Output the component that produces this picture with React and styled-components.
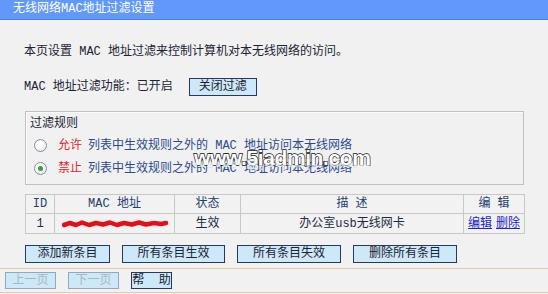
import React from 'react'
import styled, { createGlobalStyle } from 'styled-components'

const font = `"Liberation Mono", "Noto Sans CJK SC", monospace`

const GlobalStyle = createGlobalStyle`
  html, body {
    margin: 0;
    padding: 0;
    background: #f1f1f1;
  }
  body {
    font-family: ${font};
    font-size: 12px;
    line-height: 14px;
    color: #1b2436;
  }
`

const Frame = styled.div`
  width: 548px;
  height: 294px;
  display: flex;
  flex-direction: column;
  overflow: hidden;
  background: #f1f1f1;
`

const Header = styled.div`
  height: 19px;
  line-height: 19px;
  padding-left: 13px;
  background: #6298f9;
  border-bottom: 1px solid #4a7ddb;
  color: #fff;
`

const Main = styled.div`
  padding: 0 24px 0 25px;
  display: flex;
  flex-direction: column;
`

const Intro = styled.div`
  margin-top: 25px;
  line-height: 14px;
  margin-left: -1px;
`

const StatusRow = styled.div`
  margin-top: 19px;
  margin-left: -1px;
  display: flex;
  align-items: center;
  gap: 16px;
  height: 18px;
`

const Button = styled.button`
  box-sizing: border-box;
  width: ${p => p.$w}px;
  height: ${p => p.$h || 18}px;
  padding: 0;
  border: 1px solid ${p => (p.disabled ? '#8ea8c6' : '#26395a')};
  background: #cde8f8;
  font-family: ${font};
  font-size: 12px;
  line-height: 14px;
  color: ${p => (p.disabled ? '#a8b6c4' : '#1b2230')};
  white-space: pre;
  flex-shrink: 0;
`

const RuleBox = styled.div`
  position: relative;
  margin-top: 15px;
  width: 499px;
  height: 74px;
  box-sizing: border-box;
  border: 1px solid #c2c2bc;
  box-shadow: inset 1px 1px 0 #fbfbfb;
  padding: 5px 0 0 4px;
`

const Legend = styled.div`
  line-height: 14px;
  margin-bottom: 3px;
`

const RadioRow = styled.div`
  display: flex;
  align-items: center;
  height: 23px;
  padding-left: 4px;
`

const Radio = styled.span`
  width: 11px;
  height: 11px;
  border-radius: 50%;
  border: 1px solid #7f8e9c;
  background: radial-gradient(circle at 40% 35%, #ffffff 30%, #dfe3e8 100%);
  margin-right: 11px;
  display: flex;
  align-items: center;
  justify-content: center;
  &::after {
    content: '';
    width: 5px;
    height: 5px;
    border-radius: 50%;
    background: ${p => (p.$on ? '#3d9a3d' : 'transparent')};
  }
`

const Action = styled.span`
  color: #e2262a;
  margin-right: 6px;
`

const RuleText = styled.span`
  color: #2c4a8e;
`

const Watermark = styled.div`
  position: absolute;
  left: 168px;
  top: ${p => (p.$mirror ? 60 : 35)}px;
  font-family: "Liberation Sans", sans-serif;
  font-weight: bold;
  font-size: 21px;
  line-height: 22px;
  letter-spacing: -0.4px;
  color: ${p => (p.$mirror ? 'rgba(255,255,255,0.7)' : '#ffffff')};
  -webkit-text-stroke: ${p => (p.$mirror ? '0.5px rgba(150,150,150,0.45)' : '1.4px #111')};
  paint-order: stroke fill;
  transform: ${p => (p.$mirror ? 'scaleY(-0.7)' : 'none')};
  transform-origin: top;
  pointer-events: none;
  white-space: nowrap;
`

const Table = styled.table`
  margin-top: 9px;
  width: 499px;
  border-collapse: collapse;
  table-layout: fixed;
  line-height: 14px;
`

const Th = styled.th`
  height: 18px;
  padding: 0;
  border: 1px solid #c8c8c4;
  font-weight: normal;
  color: #23406e;
  background: #f2f2f2;
  text-align: center;
`

const Td = styled.td`
  height: 19px;
  padding: 0;
  border: 1px solid #c8c8c4;
  background: #f2f2f2;
  text-align: center;
  color: #1f2b44;
  white-space: nowrap;
`

const Link = styled.a`
  color: #2424c8;
  text-decoration: underline;
  margin: 0 2px;
`

const ButtonRow = styled.div`
  margin-top: 11px;
  display: flex;
  gap: 12px;
`

const Footer = styled.div`
  margin-top: 5px;
  border-top: 1px solid #e4cba6;
  border-bottom: 1px solid #e4cba6;
  height: 25px;
  padding: 3px 0 0 5px;
  display: flex;
  align-items: flex-start;
  gap: 12px;
  box-sizing: border-box;
  flex-shrink: 0;
`

const Scribble = () => (
  <svg width="106" height="8" viewBox="0 0 106 8" style={{ display: 'block', margin: '0 auto' }}>
    <path
      d="M2 5 L8 3 L14 5 L20 2.5 L27 5 L34 3 L41 4.5 L48 2.5 L55 5 L62 3 L70 4.5 L77 2.5 L84 4.5 L92 3 L99 4 L104 3"
      stroke="#e3101a"
      strokeWidth="4.5"
      fill="none"
      strokeLinecap="round"
      strokeLinejoin="round"
    />
  </svg>
)

const rules = [
  { label: '允许', on: false },
  { label: '禁止', on: true },
]

export default function App() {
  return (
    <Frame>
      <GlobalStyle />
      <Header>无线网络MAC地址过滤设置</Header>
      <Main>
        <Intro>本页设置 MAC 地址过滤来控制计算机对本无线网络的访问。</Intro>
        <StatusRow>
          <span>MAC 地址过滤功能：已开启</span>
          <Button $w={68}>关闭过滤</Button>
        </StatusRow>
        <RuleBox>
          <Legend>过滤规则</Legend>
          {rules.map(r => (
            <RadioRow key={r.label}>
              <Radio $on={r.on} />
              <Action>{r.label}</Action>
              <RuleText>列表中生效规则之外的 MAC 地址访问本无线网络</RuleText>
            </RadioRow>
          ))}
          <Watermark>www.5iadmin.com</Watermark>
          <Watermark $mirror>www.5iadmin.com</Watermark>
        </RuleBox>
        <Table>
          <colgroup>
            <col style={{ width: 29 }} />
            <col style={{ width: 120 }} />
            <col style={{ width: 66 }} />
            <col style={{ width: 223 }} />
            <col style={{ width: 61 }} />
          </colgroup>
          <thead>
            <tr>
              <Th>ID</Th>
              <Th>MAC 地址</Th>
              <Th>状态</Th>
              <Th>描 述</Th>
              <Th>编 辑</Th>
            </tr>
          </thead>
          <tbody>
            <tr>
              <Td>1</Td>
              <Td><Scribble /></Td>
              <Td>生效</Td>
              <Td>办公室usb无线网卡</Td>
              <Td>
                <Link>编辑</Link><Link>删除</Link>
              </Td>
            </tr>
          </tbody>
        </Table>
        <ButtonRow>
          <Button $w={85}>添加新条目</Button>
          <Button $w={103}>所有条目生效</Button>
          <Button $w={104}>所有条目失效</Button>
          <Button $w={104}>删除所有条目</Button>
        </ButtonRow>
      </Main>
      <Footer>
        <Button $w={51} $h={17} disabled>上一页</Button>
        <Button $w={51} $h={17} disabled>下一页</Button>
        <Button $w={41} $h={17}>帮  助</Button>
      </Footer>
    </Frame>
  )
}
